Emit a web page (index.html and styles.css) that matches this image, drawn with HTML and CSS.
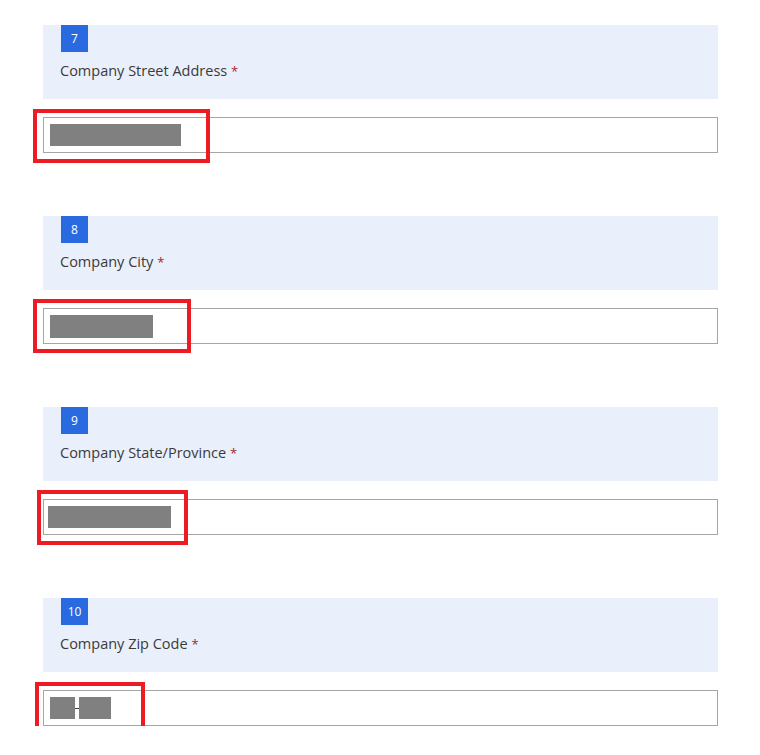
FILE: index.html
```html
<!DOCTYPE html>
<html>
<head>
<meta charset="utf-8">
<link rel="stylesheet" href="styles.css">
</head>
<body>
<div class="form">
  <div class="question">
    <div class="q-head">
      <span class="badge">7</span>
      <div class="label">Company Street Address <span class="req">*</span></div>
    </div>
    <div class="field">
      <div class="input"><span class="redact r1"></span></div>
      <div class="mark m1"></div>
    </div>
  </div>
  <div class="question">
    <div class="q-head">
      <span class="badge">8</span>
      <div class="label">Company City <span class="req">*</span></div>
    </div>
    <div class="field">
      <div class="input"><span class="redact r2"></span></div>
      <div class="mark m2"></div>
    </div>
  </div>
  <div class="question">
    <div class="q-head">
      <span class="badge">9</span>
      <div class="label">Company State/Province <span class="req">*</span></div>
    </div>
    <div class="field">
      <div class="input input-tight"><span class="redact r3"></span></div>
      <div class="mark m3"></div>
    </div>
  </div>
  <div class="question">
    <div class="q-head">
      <span class="badge">10</span>
      <div class="label">Company Zip Code <span class="req">*</span></div>
    </div>
    <div class="field">
      <div class="input zip"><span class="redact r4a"></span><span class="dash"></span><span class="redact r4b"></span></div>
      <div class="mark m4"></div>
    </div>
  </div>
</div>
</body>
</html>
```
FILE: styles.css
```css
html, body {
  margin: 0;
  padding: 0;
  background: #ffffff;
}
body {
  font-family: "Open Sans", "Noto Sans", sans-serif;
  color: #323130;
}
.form {
  padding: 25px 42px 0 43px;
  width: 675px;
  display: flex;
  flex-direction: column;
  gap: 63px;
}
.question {
  display: flex;
  flex-direction: column;
  gap: 18px;
}
.q-head {
  background: #e9f0fc;
  height: 74px;
  box-sizing: border-box;
  padding-left: 17px;
  display: flex;
  flex-direction: column;
  align-items: flex-start;
}
.badge {
  margin-left: 1px;
  width: 27px;
  height: 27px;
  background: #2a6ae0;
  color: #ffffff;
  font-size: 12px;
  line-height: 27px;
  text-align: center;
  box-sizing: border-box;
}
.label {
  margin-top: 9px;
  font-size: 14.5px;
  line-height: 20px;
  color: #3b3a39;
}
.req {
  color: #a4262c;
  font-size: 13px;
}
.field {
  position: relative;
}
.input {
  height: 36px;
  box-sizing: border-box;
  border: 1px solid #a6a6a6;
  background: #fff;
  display: flex;
  align-items: center;
  padding-left: 6px;
}
.input-tight {
  padding-left: 4px;
}
.redact {
  display: block;
  background: #808080;
  height: 22px;
}
.r1 { width: 131px; }
.r2 { width: 103px; height: 23px; }
.r3 { width: 123px; }
.r4a { width: 25px; }
.r4b { width: 32px; }
.dash {
  width: 4px;
  height: 1px;
  background: #444;
}
.zip { padding-left: 6px; }
.mark {
  position: absolute;
  border: 4px solid #ed1c24;
  box-sizing: border-box;
  pointer-events: none;
}
.m1 { left: -10px; top: -8px; width: 177px; height: 54px; }
.m2 { left: -10px; top: -9px; width: 158px; height: 54px; }
.m3 { left: -6px; top: -9px; width: 151px; height: 55px; }
.m4 { left: -8px; top: -8px; width: 110px; height: 53px; }
```
